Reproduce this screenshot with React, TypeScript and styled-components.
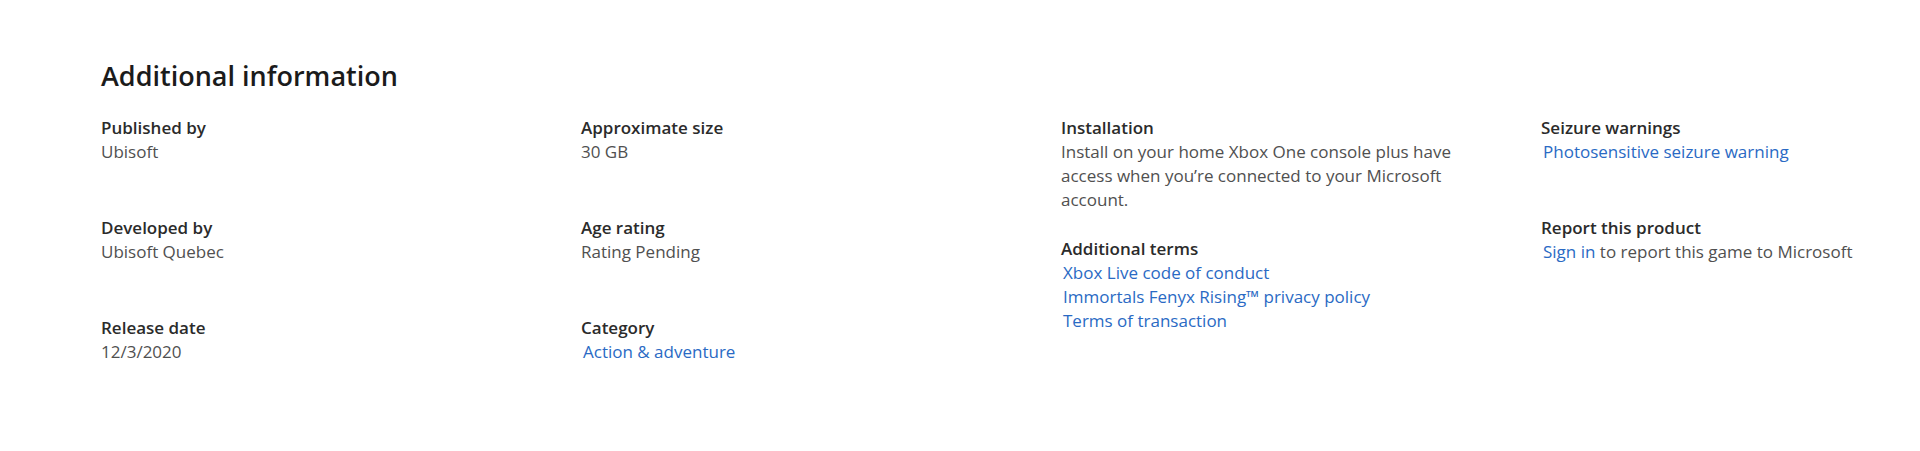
import React from 'react'
import styled, { createGlobalStyle } from 'styled-components'

const GlobalStyle = createGlobalStyle`
  body {
    margin: 0;
    background: #ffffff;
    font-family: "Open Sans", "Noto Sans", Arial, sans-serif;
  }
`

const Section = styled.section`
  padding: 58px 0 0 101px;
  height: 451px;
  box-sizing: border-box;
`

const Heading = styled.h2`
  margin: 0 0 23px;
  font-size: 27px;
  line-height: 35px;
  font-weight: 600;
  color: #1b1b1b;
`

const Columns = styled.div`
  display: grid;
  grid-template-columns: 480px 480px 480px 1fr;
`

const Column = styled.div`
  display: flex;
  flex-direction: column;
`

const Group = styled.div`
  min-height: 75px;
  margin-bottom: 25px;
  max-width: 400px;
`

const Label = styled.div`
  font-size: 17px;
  line-height: 24px;
  font-weight: 600;
  color: #2b2b2b;
`

const Value = styled.div`
  font-size: 17px;
  line-height: 24px;
  color: #505050;
`

const Link = styled.a`
  display: inline-block;
  padding-left: 2px;
  font-size: 17px;
  line-height: 24px;
  color: #2a6ac4;
  text-decoration: none;
  cursor: pointer;
`

const LinkList = styled.div`
  display: flex;
  flex-direction: column;
  align-items: flex-start;
`

const App = () => {
  return (
    <>
      <GlobalStyle />
      <Section>
        <Heading>Additional information</Heading>
        <Columns>
          <Column>
            <Group>
              <Label>Published by</Label>
              <Value>Ubisoft</Value>
            </Group>
            <Group>
              <Label>Developed by</Label>
              <Value>Ubisoft Quebec</Value>
            </Group>
            <Group>
              <Label>Release date</Label>
              <Value>12/3/2020</Value>
            </Group>
          </Column>
          <Column>
            <Group>
              <Label>Approximate size</Label>
              <Value>30 GB</Value>
            </Group>
            <Group>
              <Label>Age rating</Label>
              <Value>Rating Pending</Value>
            </Group>
            <Group>
              <Label>Category</Label>
              <Link>Action &amp; adventure</Link>
            </Group>
          </Column>
          <Column>
            <Group>
              <Label>Installation</Label>
              <Value>
                Install on your home Xbox One console plus have access when you’re connected to your Microsoft
                account.
              </Value>
            </Group>
            <Group>
              <Label>Additional terms</Label>
              <LinkList>
                <Link>Xbox Live code of conduct</Link>
                <Link>Immortals Fenyx Rising™ privacy policy</Link>
                <Link>Terms of transaction</Link>
              </LinkList>
            </Group>
          </Column>
          <Column>
            <Group>
              <Label>Seizure warnings</Label>
              <Link>Photosensitive seizure warning</Link>
            </Group>
            <Group>
              <Label>Report this product</Label>
              <Value>
                <Link>Sign in</Link> to report this game to Microsoft
              </Value>
            </Group>
          </Column>
        </Columns>
      </Section>
    </>
  )
}

export default App
